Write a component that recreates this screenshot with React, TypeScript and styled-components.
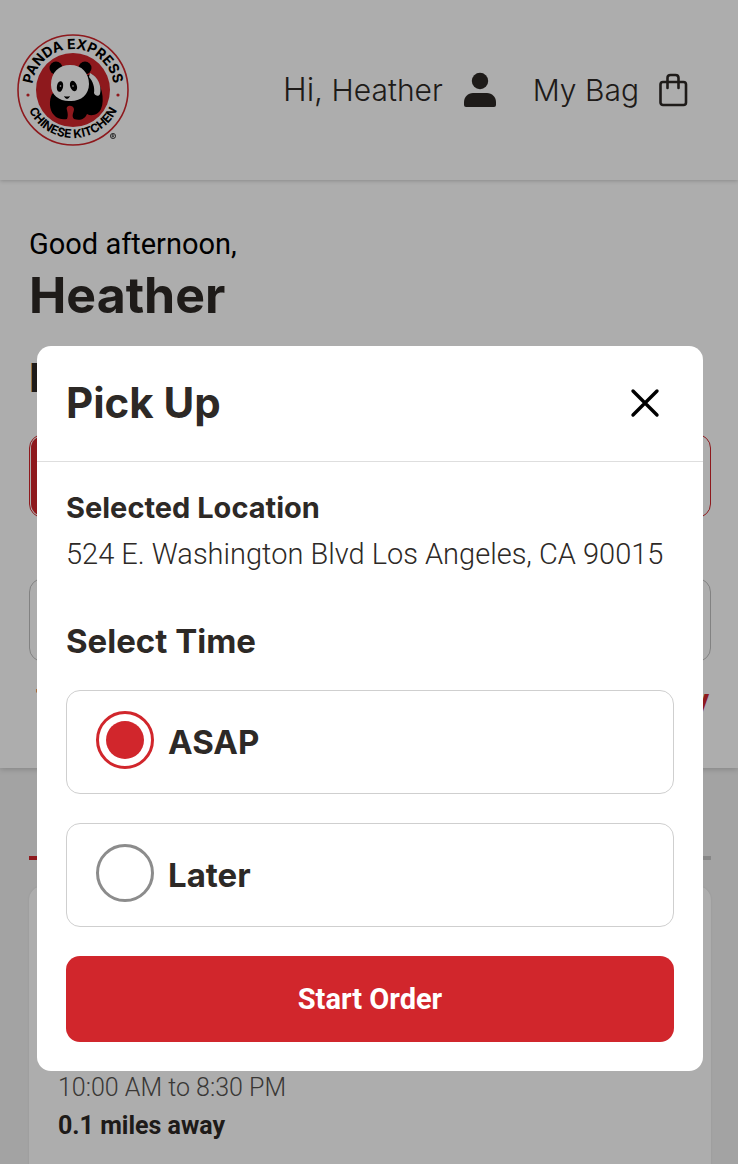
import React from "react";
import styled, { createGlobalStyle } from "styled-components";

const display = `Inter, "Open Sans", sans-serif`;
const body = `Roboto, "Noto Sans", sans-serif`;
const red = "#d1262c";
const ink = "#2d2926";

const GlobalStyle = createGlobalStyle`
  *, *::before, *::after { box-sizing: border-box; }
  body { margin: 0; background: #f0f0f0; color: ${ink}; font-family: ${body}; }
  h1, h2, h3, p, fieldset { margin: 0; padding: 0; border: 0; }
  button { font: inherit; cursor: pointer; }
`;

const Page = styled.div`
  position: relative;
  min-height: 100vh;
  display: flex;
  flex-direction: column;
  overflow: hidden;
`;

const Header = styled.header`
  height: 180px;
  padding: 0 50px 0 16px;
  display: flex;
  align-items: center;
  background: #fff;
  box-shadow: 0 1px 4px rgba(0, 0, 0, 0.2);
  z-index: 1;
`;

const LogoLink = styled.a`
  display: block;
  margin-right: auto;
  line-height: 0;
`;

const Nav = styled.nav`
  display: flex;
  align-items: center;
  gap: 36px;
`;

const NavLink = styled.a`
  display: flex;
  align-items: center;
  gap: 20px;
  font: 300 30px/40px ${display};
  color: ${ink};
  text-decoration: none;
  white-space: nowrap;
`;

const Salute = styled.span`
  font-size: 32px;
`;

const Welcome = styled.section`
  height: 588px;
  padding: 46px 27px 0 29px;
  background: #fff;
  box-shadow: 0 1px 6px rgba(0, 0, 0, 0.2);
`;

const Greeting = styled.p`
  font: 400 29px/36px ${body};
  color: #000;
`;

const Name = styled.h1`
  font: 700 50px/66px ${display};
`;

const Question = styled.h2`
  margin-top: 20px;
  font: 700 40px/60px ${display};
`;

const Choice = styled.div<{ $active?: boolean }>`
  height: 84px;
  margin-top: ${(p) => (p.$active ? "26px" : "60px")};
  border: 1px solid ${(p) => (p.$active ? red : "#c0c0c0")};
  border-radius: 14px;
  padding: 1px;

  &::before {
    content: "";
    display: ${(p) => (p.$active ? "block" : "none")};
    width: 50%;
    height: 100%;
    border-radius: 12px 0 0 12px;
    background: ${red};
  }
`;

const Links = styled.div`
  display: flex;
  justify-content: space-between;
  margin-top: 18px;
  padding: 0 2px 0 7px;
  font: 700 30px/40px ${body};
  color: ${red};
`;

const Results = styled.section`
  flex: 1;
  padding: 88px 27px 0 29px;
  display: flex;
  flex-direction: column;
`;

const TabLine = styled.div`
  height: 4px;
  background: linear-gradient(to right, ${red} 50%, #c8c8c8 50%);
`;

const Store = styled.article`
  flex: 1;
  margin-top: 26px;
  padding: 183px 29px 0;
  border-radius: 14px 14px 0 0;
  background: #fff;
  box-shadow: 0 0 2px rgba(0, 0, 0, 0.1);
`;

const Detail = styled.p<{ $strong?: boolean }>`
  font: ${(p) => (p.$strong ? 700 : 300)} 25px/38px ${body};
  color: ${(p) => (p.$strong ? ink : "#55524f")};
`;

const Overlay = styled.div`
  position: absolute;
  inset: 0;
  z-index: 2;
  padding: 346px 35px 0 37px;
  background: rgba(0, 0, 0, 0.32);
`;

const Dialog = styled.div`
  border-radius: 14px;
  background: #fff;
`;

const DialogHeader = styled.div`
  height: 116px;
  padding: 0 38px 2px 29px;
  display: flex;
  align-items: center;
  justify-content: space-between;
  border-bottom: 1px solid #dedede;
`;

const DialogTitle = styled.h2`
  font: 700 42px/48px ${display};
`;

const CloseButton = styled.button`
  display: block;
  padding: 0;
  border: 0;
  background: none;
  line-height: 0;
`;

const DialogBody = styled.form`
  padding: 28px 29px 29px;
`;

const Label = styled.h3`
  font: 700 29px/36px ${display};
`;

const Address = styled.p`
  margin-top: 8px;
  font: 300 29px/40px ${body};
  white-space: nowrap;
`;

const TimeGroup = styled.fieldset`
  margin-top: 47px;
  min-width: 0;
`;

const Legend = styled.legend`
  padding: 0;
  font: 700 33px/40px ${display};
`;

const Option = styled.label`
  height: 104px;
  margin-top: 29px;
  padding: 0 29px 4px;
  display: flex;
  align-items: center;
  gap: 14px;
  border: 1px solid #cfcfcf;
  border-radius: 14px;
  cursor: pointer;
`;

const Radio = styled.input`
  appearance: none;
  width: 58px;
  height: 58px;
  margin: 0;
  border: 3px solid #8c8c8c;
  border-radius: 50%;

  &:checked {
    border-color: ${red};
    background: ${red};
    background-clip: content-box;
    padding: 7px;
  }
`;

const OptionText = styled.span`
  padding-top: 4px;
  font: 700 33px/40px ${display};
`;

const SubmitButton = styled.button`
  display: block;
  width: 100%;
  height: 86px;
  margin-top: 29px;
  border: 0;
  border-radius: 14px;
  background: ${red};
  color: #fff;
  font: 700 29px/40px ${body};
`;

function Logo() {
  return (
    <svg width="114" height="114" viewBox="0 0 114 114" role="img" aria-label="Panda Express Chinese Kitchen">
      <defs>
        <path id="ringTop" d="M 16 62 L 16 57 A 41 41 0 0 1 98 57 L 98 62" />
        <path id="ringBottom" d="M 8 56 A 49 49 0 0 0 106 56" />
      </defs>
      <circle cx="57" cy="57" r="55" fill="#fff" stroke={red} strokeWidth="1.6" />
      <circle cx="57" cy="57" r="37" fill={red} />
      <g fontFamily="Inter, sans-serif" fontWeight="700" fill="#000" textAnchor="middle">
        <text fontSize="14">
          <textPath href="#ringTop" startOffset="50%">PANDA EXPRESS</textPath>
        </text>
        <text fontSize="12">
          <textPath href="#ringBottom" startOffset="50%">CHINESE KITCHEN</textPath>
        </text>
      </g>
      <circle cx="12" cy="62" r="1.6" fill={red} />
      <circle cx="102" cy="62" r="1.6" fill={red} />
      <path d="M36 61 C33 67 33 77 38 82 C41 86 47 87 51 86 C52 83 52 81 51 77 C49 72 57 71 58 76 C58 79 55 83 58 86 C64 88 69 86 71 81 C76 84 83 81 85 76 C89 67 86 50 76 41 L64 44 Z" fill="#000" />
      <path d="M74 40 C82 44 86 53 84 61 C83 64 79 63 78 60 C79 55 77 48 73 44 Z" fill="#fff" />
      <circle cx="40" cy="35" r="6.500" fill="#000" />
      <circle cx="69" cy="35" r="6.500" fill="#000" />
      <path d="M35 52 C35 39 43 32 54 32 C66 32 73 40 73 51 C73 62 64 69 53 68 C43 68 35 62 35 52 Z" fill="#fff" />
      <ellipse cx="44" cy="53.500" rx="3.100" ry="5.400" transform="rotate(10 44 53.500)" fill="#000" />
      <ellipse cx="57.500" cy="53" rx="3.300" ry="5.400" transform="rotate(-20 57.500 53)" fill="#000" />
      <circle cx="44.500" cy="53" r="0.800" fill="#fff" />
      <circle cx="57" cy="53" r="0.800" fill="#fff" />
      <path d="M48 63 Q51 64 54 63 Q53 66 51 66 Q49 66 48 63 Z" fill="#000" />
      <circle cx="97" cy="103" r="2.600" fill="none" stroke="#000" strokeWidth="0.700" />
      <path d="M96.200 104.600 V101.600 H97.400 Q98.400 102.400 97.400 103.200 H96.200 M97.300 103.200 L98.200 104.600" fill="none" stroke="#000" strokeWidth="0.600" />
    </svg>
  );
}

function PersonIcon() {
  return (
    <svg width="34" height="36" viewBox="0 0 34 36" fill={ink} aria-hidden="true">
      <circle cx="17" cy="9" r="8.200" />
      <path d="M1 33 V30 C1 25 5 21 10 21 H24 C29 21 33 25 33 30 V33 Q33 35 31 35 H3 Q1 35 1 33 Z" />
    </svg>
  );
}

function BagIcon() {
  return (
    <svg width="29" height="34" viewBox="0 0 29 34" fill="none" stroke={ink} strokeWidth="2.600" strokeLinecap="round" aria-hidden="true">
      <rect x="1.500" y="9" width="25.500" height="23" rx="2.500" />
      <path d="M8.500 15 V5 Q8.500 2 11.500 2 H16.500 Q19.500 2 19.500 5 V15" />
    </svg>
  );
}

function CloseIcon() {
  return (
    <svg width="40" height="40" viewBox="0 0 40 40" fill="none" stroke="#000" strokeWidth="3.400" strokeLinecap="round" aria-hidden="true">
      <path d="M8 8 L32 32 M32 8 L8 32" />
    </svg>
  );
}

export default function App() {
  return (
    <Page>
      <GlobalStyle />
      <Header>
        <LogoLink href="#home"><Logo /></LogoLink>
        <Nav>
          <NavLink href="#account">
            <span><Salute>Hi,</Salute> Heather</span>
            <PersonIcon />
          </NavLink>
          <NavLink href="#bag">
            My Bag
            <BagIcon />
          </NavLink>
        </Nav>
      </Header>
      <Welcome>
        <Greeting>Good afternoon,</Greeting>
        <Name>Heather</Name>
        <Question>H</Question>
        <Choice $active />
        <Choice />
        <Links><span>T</span><span>y</span></Links>
      </Welcome>
      <Results>
        <TabLine />
        <Store>
          <Detail>10:00 AM to 8:30 PM</Detail>
          <Detail $strong>0.1 miles away</Detail>
        </Store>
      </Results>
      <Overlay>
        <Dialog role="dialog" aria-modal="true" aria-labelledby="pickup-title">
          <DialogHeader>
            <DialogTitle id="pickup-title">Pick Up</DialogTitle>
            <CloseButton type="button" aria-label="Close"><CloseIcon /></CloseButton>
          </DialogHeader>
          <DialogBody onSubmit={(e) => e.preventDefault()}>
            <Label>Selected Location</Label>
            <Address>524 E. Washington Blvd Los Angeles, CA 90015</Address>
            <TimeGroup>
              <Legend>Select Time</Legend>
              <Option>
                <Radio type="radio" name="time" value="asap" defaultChecked />
                <OptionText>ASAP</OptionText>
              </Option>
              <Option>
                <Radio type="radio" name="time" value="later" />
                <OptionText>Later</OptionText>
              </Option>
            </TimeGroup>
            <SubmitButton type="submit">Start Order</SubmitButton>
          </DialogBody>
        </Dialog>
      </Overlay>
    </Page>
  );
}
